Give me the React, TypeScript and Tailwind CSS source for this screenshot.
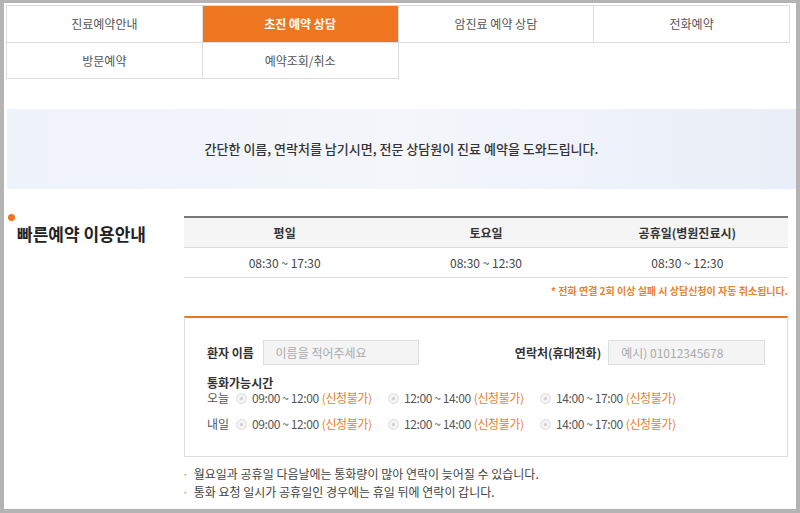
import React from "react";

const font = { fontFamily: '"Noto Sans CJK KR", "Noto Sans", sans-serif' };

function Radio() {
  return <span className="inline-block w-[11px] h-[11px] rounded-full border border-[#ddd] bg-[#f4f4f4] relative mr-[5px]"><span className="absolute left-[3px] top-[3px] w-[3px] h-[3px] rounded-full bg-[#ccc]" /></span>;
}

function Slot({ t }: { t: string }) {
  return (
    <div className="flex items-center w-[152px] tracking-[-0.4px]">
      <Radio />
      <span className="text-[#555]">{t}</span>
      <span className="text-[#e8822f] ml-[3px]">(신청불가)</span>
    </div>
  );
}

export default function App() {
  const tabs1 = ["진료예약안내", "초진 예약 상담", "암진료 예약 상담", "전화예약"];
  return (
    <div style={font} className="w-[800px] h-[513px] bg-[#b4b4b4] pt-[3px] pl-[4px] pr-[4px] pb-[4px] overflow-hidden">
      <div className="bg-white h-full relative">
        <div className="pt-[2px] pl-[2px] pr-[7px]">
          <div className="grid grid-cols-4 w-[784px] border-l border-t border-[#ddd] text-[12px]">
            {tabs1.map((t, i) => (
              <div key={t} className={`h-[37px] flex items-center justify-center border-r border-b border-[#ddd] ${i === 1 ? "bg-[#ef7620] text-white font-bold" : "text-[#555]"}`}>{t}</div>
            ))}
            <div className="h-[36px] flex items-center justify-center border-r border-b border-[#ddd] text-[#555]">방문예약</div>
            <div className="h-[36px] flex items-center justify-center border-r border-b border-[#ddd] text-[#555]">예약조회/취소</div>
          </div>
        </div>
        <div className="mt-[30px] ml-[3px] mr-[0px] h-[80px] bg-gradient-to-r from-[#eef2f9] via-[#f4f6fb] to-[#e9eef8] flex items-center justify-center text-[13px] text-[#333] font-medium">
          간단한 이름, 연락처를 남기시면, 전문 상담원이 진료 예약을 도와드립니다.
        </div>
        <div className="flex mt-[27px]">
          <div className="w-[180px] pl-[4px]">
            <div className="w-[7px] h-[7px] rounded-full bg-[#ef7620] mt-[-2px]" />
            <div className="text-[17px] font-bold text-[#222] ml-[9px] mt-[1px] leading-[24px]">빠른예약 이용안내</div>
          </div>
          <div className="w-[604px]">
            <div className="border-t-2 border-[#777]">
              <div className="grid grid-cols-3 h-[30px] bg-[#f5f5f5] border-b border-[#ddd] text-[12px] font-bold text-[#333]">
                {["평일", "토요일", "공휴일(병원진료시)"].map((t) => <div key={t} className="flex items-center justify-center">{t}</div>)}
              </div>
              <div className="grid grid-cols-3 h-[30px] border-b border-[#ddd] text-[12px] text-[#444]">
                {["08:30 ~ 17:30", "08:30 ~ 12:30", "08:30 ~ 12:30"].map((t, i) => <div key={i} className="flex items-center justify-center">{t}</div>)}
              </div>
            </div>
            <div className="text-right text-[10px] text-[#e8822f] font-bold mt-[5px] h-[20px]">* 전화 연결 2회 이상 실패 시 상담신청이 자동 취소됩니다.</div>
            <div className="mt-[13px] border-t-2 border-[#ef7620] border-x border-b border-x-[#ddd] border-b-[#ddd] h-[141px] px-[22px] pt-[22px] text-[12px]">
              <div className="flex items-center">
                <span className="font-bold text-[#333] w-[58px]">환자 이름</span>
                <div className="w-[163px] h-[25px] bg-[#f4f4f4] border border-[#ddd] flex items-center pl-[12px] text-[#aaa]">이름을 적어주세요</div>
                <span className="font-bold text-[#333] ml-[86px] w-[100px] text-right mr-[7px]">연락처(휴대전화)</span>
                <div className="w-[163px] h-[25px] bg-[#f4f4f4] border border-[#ddd] flex items-center pl-[12px] text-[#aaa]">예시) 01012345678</div>
              </div>
              <div className="mt-[11px] font-bold text-[#333] leading-[14px]">통화가능시간</div>
              <div className="flex items-center leading-[14px] mt-[1px]">
                <span className="text-[#555] w-[29px]">오늘</span>
                <Slot t="09:00 ~ 12:00" /><Slot t="12:00 ~ 14:00" /><Slot t="14:00 ~ 17:00" />
              </div>
              <div className="flex items-center mt-[10px]">
                <span className="text-[#555] w-[29px]">내일</span>
                <Slot t="09:00 ~ 12:00" /><Slot t="12:00 ~ 14:00" /><Slot t="14:00 ~ 17:00" />
              </div>
            </div>
          </div>
        </div>
        <div className="ml-[178px] mt-[8px] text-[12px] text-[#444] leading-[18px]">
          <div><span className="text-[#e8822f] mr-[5px]">·</span>월요일과 공휴일 다음날에는 통화량이 많아 연락이 늦어질 수 있습니다.</div>
          <div><span className="text-[#e8822f] mr-[5px]">·</span>통화 요청 일시가 공휴일인 경우에는 휴일 뒤에 연락이 갑니다.</div>
        </div>
      </div>
    </div>
  );
}
